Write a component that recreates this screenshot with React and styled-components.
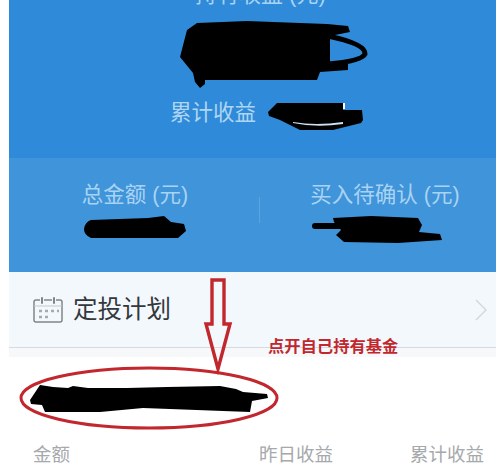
import React from 'react';
import styled, { createGlobalStyle } from 'styled-components';

const GlobalStyle = createGlobalStyle`
  html, body {
    margin: 0;
    padding: 0;
    background: #fff;
    font-family: "Liberation Sans", "Noto Sans CJK SC", sans-serif;
  }
`;

const App = () => {
  return (
    <Page>
      <GlobalStyle />
      <Content>
        <Hero>
          <HeroTitle>持有收益 (元)</HeroTitle>
          <HeroAmount>
            <ScribbleSvg width="192" height="70" viewBox="0 0 192 70">
              <path d="M9 10 L19 3 L69 1 L149 4 L170 6 L172 12 L152 16 L152 42 L170 44 L170 50 L142 52 L139 60 L27 60 L27 64 L22 68 L17 62 L15 53 L2 37 Z" fill="#000" />
              <path d="M150 16 Q188 24 187 34 Q184 41 150 44" fill="none" stroke="#000" strokeWidth="5" />
            </ScribbleSvg>
          </HeroAmount>
          <HeroEarnings>
            <EarningsLabel>累计收益</EarningsLabel>
            <ScribbleSvg width="98" height="32" viewBox="0 0 98 32">
              <path d="M2 12 L11 3 L77 3 L77 10 L96 10 L97 20 L95 23 L67 30 L34 30 L14 20 L3 16 Z" fill="#000" />
              <path d="M27 22 Q50 26 77 22 L77 24 Q50 28 27 23 Z" fill="#cde3f5" />
              <rect x="77" y="3" width="2" height="6" fill="#fff" />
            </ScribbleSvg>
          </HeroEarnings>
        </Hero>
        <Summary>
          <SummaryCell>
            <SummaryLabel>总金额 (元)</SummaryLabel>
            <ScribbleSvg width="104" height="26" viewBox="0 0 104 26">
              <path d="M1 14 Q2 7 8 5 L65 3 L81 1 L88 7 L101 9 L103 16 L95 23 L28 23 L8 23 Q1 20 1 14 Z" fill="#000" />
            </ScribbleSvg>
          </SummaryCell>
          <Divider />
          <SummaryCell $wide>
            <SummaryLabel>买入待确认 (元)</SummaryLabel>
            <PendingScribble width="132" height="30" viewBox="0 0 132 30">
              <path d="M4 11 H30" fill="none" stroke="#000" strokeWidth="6" strokeLinecap="round" />
              <path d="M22 3 L60 1 L107 3 L111 10 L108 17 L129 19 L131 25 L87 28 L33 27 L25 20 L30 15 L23 7 Z" fill="#000" />
            </PendingScribble>
          </SummaryCell>
        </Summary>
        <PlanRow>
          <PlanLeft>
            <CalendarIcon />
            <PlanTitle>定投计划</PlanTitle>
          </PlanLeft>
          <ScribbleSvg width="13" height="22" viewBox="0 0 13 22">
            <path d="M1 1 L11 11 L1 21" fill="none" stroke="#d3d6da" strokeWidth="1.4" />
          </ScribbleSvg>
        </PlanRow>
        <RowGap />
        <FundRow>
          <ScribbleSvg width="242" height="31" viewBox="0 0 242 31">
            <path d="M2 17 L12 2 L25 4 L40 5 L45 3 L60 5 L99 5 L139 4 L192 3 L208 6 L215 9 L239 11 L240 15 L224 18 L222 29 L115 25 L72 29 L17 29 L14 22 L3 21 Z" fill="#000" />
          </ScribbleSvg>
        </FundRow>
        <ColumnRow>
          <ColumnLabel>金额</ColumnLabel>
          <ColumnGroup>
            <ColumnLabel>昨日收益</ColumnLabel>
            <ColumnLabel>累计收益</ColumnLabel>
          </ColumnGroup>
        </ColumnRow>
      </Content>
      <Annotation width="496" height="469" viewBox="0 0 496 469">
        <path d="M212 280 L224 280 L224 324 L230 324 L218 369 L206 324 L212 324 Z" fill="none" stroke="#c1272d" strokeWidth="3.4" />
        <ellipse cx="149" cy="398" rx="128" ry="30" fill="none" stroke="#c1272d" strokeWidth="3" />
      </Annotation>
      <Note>点开自己持有基金</Note>
    </Page>
  );
};

const CalendarIcon = () => (
  <ScribbleSvg width="30" height="26" viewBox="0 0 30 26">
    <path d="M7 3 H3 Q1 3 1 5 V23 Q1 25 3 25 H27 Q29 25 29 23 V5 Q29 3 27 3 H23 M11 3 H19" fill="none" stroke="#7f878d" strokeWidth="1.5" />
    <path d="M9 1 V6 M21 1 V6" stroke="#7f878d" strokeWidth="2" strokeLinecap="round" />
    <path d="M1 9 H29" stroke="#c3c8cc" strokeWidth="1" />
    <path d="M6 14 h3 M12 14 h3 M18 14 h3 M24 14 h2 M6 20 h3 M12 20 h3" stroke="#a4abb0" strokeWidth="2.4" />
  </ScribbleSvg>
);

const Page = styled.div`
  position: relative;
  width: 496px;
  height: 469px;
  overflow: hidden;
  background: #fff;
`;

const Content = styled.div`
  margin-left: 9px;
  display: flex;
  flex-direction: column;
  height: 469px;
`;

const Hero = styled.section`
  height: 158px;
  background: #2f8bd9;
  display: flex;
  flex-direction: column;
  align-items: flex-start;
`;

const HeroTitle = styled.div`
  margin: -16px 0 0 186px;
  height: 22px;
  line-height: 22px;
  font-size: 22px;
  color: #a9d3f2;
`;

const HeroAmount = styled.div`
  margin: 14px 0 0 169px;
  height: 70px;
`;

const HeroEarnings = styled.div`
  margin: 10px 0 0 161px;
  display: flex;
  align-items: center;
  gap: 10px;
`;

const EarningsLabel = styled.span`
  margin-bottom: 6px;
  font-size: 21.5px;
  line-height: 26px;
  color: #aed6f2;
`;

const ScribbleSvg = styled.svg`
  display: block;
`;

const PendingScribble = styled(ScribbleSvg)`
  margin-right: 16px;
`;

const Summary = styled.section`
  height: 114px;
  background: #3f94da;
  display: flex;
  align-items: flex-start;
`;

const SummaryCell = styled.div`
  flex: ${(props) => (props.$wide ? '0 0 236px' : '0 0 250px')};
  box-sizing: border-box;
  padding: 23px 0 0 ${(props) => (props.$wide ? '14px' : '2px')};
  display: flex;
  flex-direction: column;
  align-items: center;
  gap: 6px;
`;

const SummaryLabel = styled.span`
  font-size: 21.5px;
  line-height: 28px;
  color: #a9d3f2;
  white-space: nowrap;
`;

const Divider = styled.div`
  margin-top: 39px;
  flex: 0 0 1px;
  height: 26px;
  background: #5ba4e0;
`;

const PlanRow = styled.section`
  height: 76px;
  background: #f3f8fd;
  border-bottom: 1px solid #d5dbe2;
  box-sizing: border-box;
  display: flex;
  align-items: center;
  justify-content: space-between;
  padding: 0 8px 0 24px;
`;

const PlanLeft = styled.div`
  display: flex;
  align-items: center;
  gap: 10px;
`;

const PlanTitle = styled.span`
  margin-bottom: 4px;
  font-size: 24.5px;
  color: #33383c;
`;

const RowGap = styled.div`
  height: 9px;
  background: #f7f8f9;
`;

const FundRow = styled.section`
  height: 59px;
  padding: 26px 0 0 19px;
`;

const ColumnRow = styled.section`
  display: flex;
  justify-content: space-between;
  padding: 1px 12px 0 24px;
`;

const ColumnGroup = styled.div`
  display: flex;
  gap: 77px;
`;

const ColumnLabel = styled.span`
  font-size: 18.5px;
  line-height: 24px;
  color: #a6a9ac;
`;

const Annotation = styled.svg`
  position: absolute;
  top: 0;
  left: 0;
  pointer-events: none;
`;

const Note = styled.div`
  position: absolute;
  left: 268px;
  top: 336px;
  font-size: 16.3px;
  line-height: 20px;
  font-weight: 700;
  color: #c1272d;
`;

export default App;
